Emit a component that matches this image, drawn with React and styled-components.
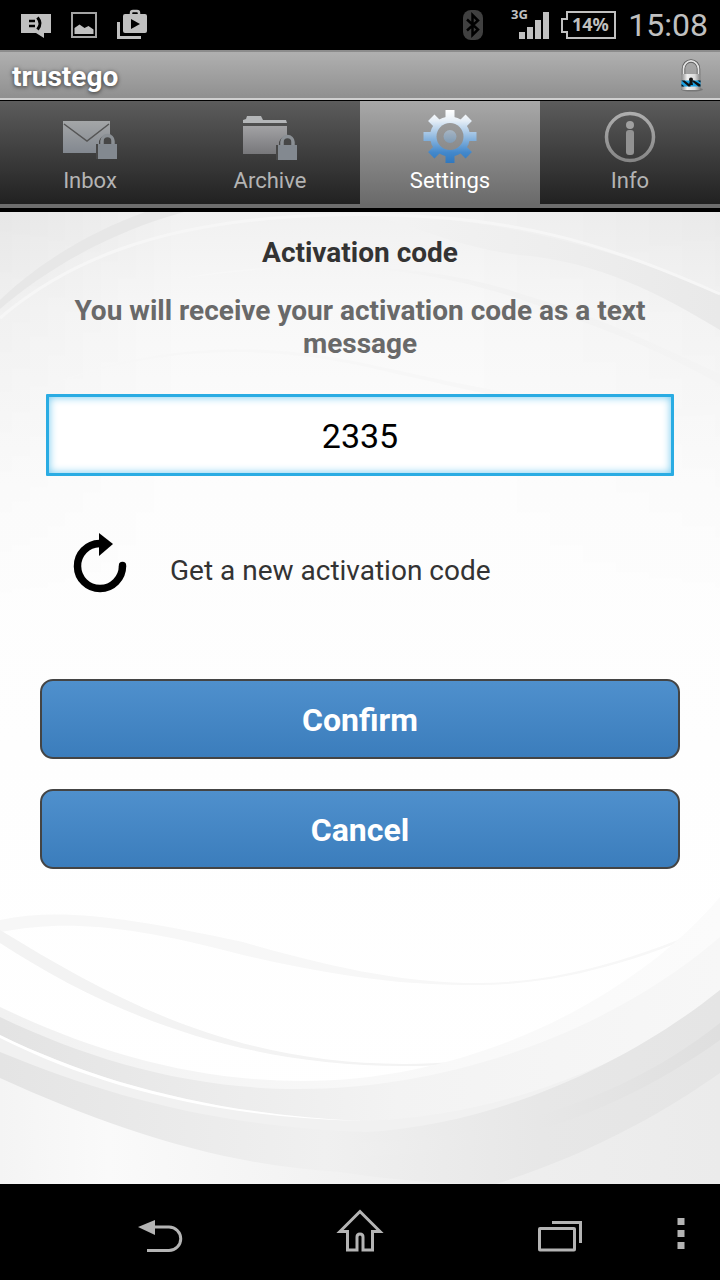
import React, { useState } from 'react';
import styled, { createGlobalStyle } from 'styled-components';

const GlobalStyle = createGlobalStyle`
  * {
    box-sizing: border-box;
  }
  body {
    margin: 0;
    background: #000000;
    font-family: Roboto, "Noto Sans", sans-serif;
  }
  svg {
    display: block;
    flex-shrink: 0;
  }
`;

const Screen = styled.div`
  display: flex;
  flex-direction: column;
  min-height: 100vh;
`;

const StatusBar = styled.div`
  display: flex;
  align-items: center;
  justify-content: space-between;
  height: 50px;
  padding: 0 12px 0 20px;
  color: #c0c0c0;
`;

const Notifications = styled.div`
  display: flex;
  align-items: center;
  gap: 20px;
`;

const Indicators = styled.div`
  display: flex;
  align-items: center;
  gap: 12px;
`;

const Bluetooth = styled.svg`
  margin-right: 14px;
`;

const Clock = styled.span`
  font-size: 32px;
  line-height: 50px;
`;

const TitleBar = styled.header`
  display: flex;
  align-items: center;
  justify-content: space-between;
  height: 51px;
  padding: 0 16px 0 12px;
  background: linear-gradient(#b0b0b0, #8e8e8e);
  border-top: 2px solid #8c8c8c;
  border-bottom: 1px solid #000000;
  box-shadow: inset 0 -2px 0 #cfcfcf;
`;

const AppName = styled.h1`
  margin: 0;
  font-size: 28px;
  line-height: 33px;
  font-weight: 700;
  color: #ffffff;
  text-shadow: 0 1px 4px rgba(0, 0, 0, 0.7);
`;

const Tabs = styled.nav`
  display: flex;
  height: 111px;
  border-bottom: 4px solid #000000;
`;

const Tab = styled.button`
  flex: 1;
  display: flex;
  flex-direction: column;
  align-items: center;
  gap: 5px;
  padding: 8px 0 0;
  border: 0;
  border-bottom: 4px solid ${({ $active }) => ($active ? '#6a6a6a' : '#6d6d6d')};
  background: ${({ $active }) =>
    $active ? 'linear-gradient(#a8a8a8, #6a6a6a)' : 'linear-gradient(#5c5c5c, #212121)'};
  color: ${({ $active }) => ($active ? '#ffffff' : '#b4b4b4')};
  font-family: inherit;
  font-size: 22px;
  line-height: 26px;
`;

const Content = styled.main`
  position: relative;
  flex: 1;
  padding: 24px 40px;
  background: #ffffff;
`;

const Waves = styled.svg`
  position: absolute;
  inset: 0;
  width: 100%;
  height: 100%;
`;

const Form = styled.form`
  position: relative;
  display: flex;
  flex-direction: column;
`;

const Heading = styled.h2`
  margin: 0 0 25px;
  font-size: 28px;
  line-height: 33px;
  font-weight: 700;
  text-align: center;
  color: #333333;
`;

const Hint = styled.label`
  margin-bottom: 34px;
  font-size: 28px;
  line-height: 33px;
  font-weight: 700;
  text-align: center;
  color: #696969;
`;

const CodeInput = styled.input`
  height: 82px;
  margin: 0 6px 56px;
  padding: 2px 12px 0;
  border: 3px solid #2aace3;
  border-radius: 1px;
  outline: 0;
  background: #ffffff;
  box-shadow: inset 0 0 8px #6cc7ee;
  color: #000000;
  font-family: inherit;
  font-size: 34px;
  text-align: center;
`;

const NewCode = styled.button`
  display: flex;
  align-items: center;
  gap: 42px;
  height: 76px;
  margin-bottom: 71px;
  padding: 0 0 0 32px;
  border: 0;
  background: none;
  color: #333333;
  font-family: inherit;
  font-size: 28px;
  line-height: 33px;
`;

const Action = styled.button`
  height: 80px;
  margin-bottom: 30px;
  padding: 2px 0 0;
  border: 2px solid #444444;
  border-radius: 13px;
  background: linear-gradient(#4f90cd, #3b7dbc);
  color: #ffffff;
  font-family: inherit;
  font-size: 32px;
  font-weight: 700;
`;

const NavBar = styled.footer`
  display: grid;
  grid-template-columns: 1fr 1fr 1fr 42px;
  height: 96px;
  padding: 0 18px 0 60px;
`;

const NavButton = styled.button`
  display: flex;
  align-items: center;
  justify-content: center;
  padding: 0;
  border: 0;
  background: none;
`;

function ChatIcon() {
  return (
    <svg width="31" height="30" viewBox="0 0 31 30">
      <path d="M1 4h30v19h-7v5l-8-5H1z" fill="#c0c0c0" />
      <path d="M9 11h6M9 16h6" stroke="#000" strokeWidth="2.500" />
      <path d="M17.500 7.500q5 6 0 12" fill="none" stroke="#000" strokeWidth="3" />
    </svg>
  );
}

function PictureIcon() {
  return (
    <svg width="26" height="26" viewBox="0 0 26 26">
      <rect x="1" y="1" width="24" height="24" fill="none" stroke="#a4a4a4" strokeWidth="2" />
      <path d="M3.500 22v-6l5-3.500 5 3.500 4-2 5 3.500V22z" fill="#c0c0c0" />
    </svg>
  );
}

function PlayStoreIcon() {
  return (
    <svg width="30" height="32" viewBox="0 0 30 32">
      <path d="M1.500 13v15.500H24" fill="none" stroke="#c0c0c0" strokeWidth="3" />
      <rect x="6" y="5" width="24" height="19" rx="2" fill="#c0c0c0" />
      <path d="M14 6V4q0-2 2-2h4q2 0 2 2v2" fill="none" stroke="#c0c0c0" strokeWidth="2.500" />
      <path d="M14 10v10l9-5z" fill="#000" />
    </svg>
  );
}

function BluetoothIcon() {
  return (
    <Bluetooth width="20" height="30" viewBox="0 0 20 30">
      <rect width="20" height="30" rx="8" fill="#404040" />
      <path d="M4 9.500l11 10-5.500 5.500V5l5.500 5.500-11 10" fill="none" stroke="#000" strokeWidth="2.500" />
    </Bluetooth>
  );
}

function SignalIcon() {
  return (
    <svg width="40" height="46" viewBox="0 0 40 46" fill="#c0c0c0">
      <text x="2" y="17" fontFamily="Noto Sans, sans-serif" fontSize="13" fontWeight="700">3G</text>
      <path d="M10 30h6v7h-6zM18 25h6v12h-6zM26 18h6v19h-6zM34 10h6v27h-6z" />
    </svg>
  );
}

function BatteryIcon() {
  return (
    <svg width="55" height="30" viewBox="0 0 55 30">
      <path d="M6 2h48v26H6v-6H1V9h5z" fill="none" stroke="#c0c0c0" strokeWidth="2" />
      <text x="11" y="21" fontFamily="Noto Sans, sans-serif" fontSize="18" fontWeight="700" fill="#c0c0c0">14%</text>
    </svg>
  );
}

function PadlockLogo() {
  return (
    <svg width="26" height="34" viewBox="0 0 26 34">
      <defs>
        <linearGradient id="steel" x1="0" x2="1" y1="0" y2="0">
          <stop offset="0" stopColor="#8a8a8a" />
          <stop offset="0.300" stopColor="#f0f0f0" />
          <stop offset="0.700" stopColor="#dadada" />
          <stop offset="1" stopColor="#808080" />
        </linearGradient>
      </defs>
      <ellipse cx="14" cy="30.500" rx="11" ry="2" fill="#000" opacity="0.200" />
      <path d="M5.500 16V10a7 7.500 0 0 1 15 0V16" fill="none" stroke="#5e5e5e" strokeWidth="3.500" />
      <path d="M5.500 16V10a7 7.500 0 0 1 15 0V16" fill="none" stroke="#e4e4e4" strokeWidth="1.700" />
      <rect x="3.500" y="15" width="19" height="16" rx="1.500" fill="url(#steel)" />
      <path d="M3.500 21.500h19v6h-19z" fill="#1b9fe0" />
      <path d="M3.500 21.500h3l6 4.500v1.500h-2zM13 21.500h3l6.500 4v2h-2zM3.500 25l3 2.500h-3zM19.500 21.500h3v2z" fill="#111" />
      <circle cx="13" cy="20.500" r="2" fill="#111" />
      <path d="M12 21h2l1 5h-4z" fill="#111" />
    </svg>
  );
}

function SmallLock() {
  return (
    <g>
      <path d="M33 50V35h3v-3a9 9 0 0 1 17 0v3h1v15z" fill="#474747" />
      <path d="M39 36v-4a5.500 5.500 0 0 1 11 0v4" fill="none" stroke="#8b9095" strokeWidth="3.500" />
      <rect x="35" y="35" width="19" height="15" fill="#838990" />
    </g>
  );
}

function InboxIcon() {
  return (
    <svg width="54" height="54" viewBox="0 0 54 54">
      <defs>
        <linearGradient id="tabShade" gradientUnits="userSpaceOnUse" x1="0" x2="0" y1="10" y2="50">
          <stop offset="0" stopColor="#a6a8a9" />
          <stop offset="1" stopColor="#7c828b" />
        </linearGradient>
      </defs>
      <rect y="12" width="47" height="32" fill="url(#tabShade)" />
      <path d="M1 15l23 17 22-17" fill="none" stroke="#555" strokeWidth="1.500" />
      <SmallLock />
    </svg>
  );
}

function ArchiveIcon() {
  return (
    <svg width="54" height="54" viewBox="0 0 54 54">
      <defs>
        <linearGradient id="folderShade" x1="0" x2="0" y1="0" y2="1">
          <stop offset="0" stopColor="#a2a2a4" />
          <stop offset="1" stopColor="#77777a" />
        </linearGradient>
      </defs>
      <path d="M0 14v-3l3-1 1-3h14l2 4h23l1 3z" fill="#b4b6b8" />
      <rect y="17" width="44" height="28" fill="url(#folderShade)" />
      <g transform="translate(0 1)">
        <SmallLock />
      </g>
    </svg>
  );
}

function GearIcon() {
  return (
    <svg width="54" height="54" viewBox="0 0 54 54">
      <defs>
        <linearGradient id="gearShade" gradientUnits="userSpaceOnUse" x1="0" x2="0" y1="1" y2="54">
          <stop offset="0" stopColor="#ffffff" />
          <stop offset="0.200" stopColor="#e6eef6" />
          <stop offset="0.550" stopColor="#86b3de" />
          <stop offset="0.800" stopColor="#4388cb" />
          <stop offset="1" stopColor="#3078bf" />
        </linearGradient>
        <mask id="gearShape">
          <g fill="#fff">
            <circle cx="27" cy="27.500" r="20" />
            {[0, 45, 90, 135].map((angle) => (
              <rect key={angle} x="22.500" y="1" width="9" height="53" transform={`rotate(${angle} 27 27.500)`} />
            ))}
          </g>
          <circle cx="27" cy="27.500" r="13.500" fill="#000" />
          <circle cx="27" cy="27.500" r="6.500" fill="#888" />
        </mask>
      </defs>
      <rect width="54" height="54" fill="url(#gearShade)" mask="url(#gearShape)" />
    </svg>
  );
}

function InfoIcon() {
  return (
    <svg width="54" height="54" viewBox="0 0 54 54">
      <defs>
        <linearGradient id="infoShade" gradientUnits="userSpaceOnUse" x1="0" x2="0" y1="2" y2="52">
          <stop offset="0" stopColor="#b0b0b0" />
          <stop offset="1" stopColor="#868686" />
        </linearGradient>
      </defs>
      <circle cx="27" cy="28" r="23.500" fill="none" stroke="url(#infoShade)" strokeWidth="3.500" />
      <circle cx="27" cy="16" r="4" fill="#a0a0a0" />
      <rect x="23" y="21" width="8" height="25" rx="3" fill="#929292" />
    </svg>
  );
}

function RefreshIcon() {
  return (
    <svg width="56" height="76" viewBox="0 0 56 76">
      <path d="M50.500 34a22.500 22.500 0 1 1-23-22.500" fill="none" stroke="#000" strokeWidth="7.500" />
      <circle cx="50.500" cy="33.500" r="3.700" fill="#000" />
      <path d="M27 1l14 11-14 12z" fill="#000" />
    </svg>
  );
}

function BackIcon() {
  return (
    <svg width="46" height="54" viewBox="0 0 46 54">
      <path d="M1 22l17-7v15z" fill="#b4b4b4" />
      <path d="M16 22h16a11.500 11.500 0 0 1 0 23.500H10" fill="none" stroke="#b4b4b4" strokeWidth="3" />
    </svg>
  );
}

function HomeIcon() {
  return (
    <svg width="48" height="54" viewBox="0 0 48 54">
      <path
        d="M24 6.500L4 26.500h7.500v18.500h9.500V32q0-3 3-3t3 3v13h9.500V26.500H44z"
        fill="none"
        stroke="#b4b4b4"
        strokeWidth="3"
      />
    </svg>
  );
}

function RecentIcon() {
  return (
    <svg width="46" height="54" viewBox="0 0 46 54" fill="none" stroke="#b4b4b4" strokeWidth="3">
      <path d="M15 17.500h28.500V38" />
      <rect x="2.500" y="23.500" width="35" height="21.500" rx="0.500" />
    </svg>
  );
}

function MenuIcon() {
  return (
    <svg width="8" height="54" viewBox="0 0 8 54">
      <path d="M0.500 13h7v7h-7zM0.500 25h7v7h-7zM0.500 37h7v7h-7z" fill="#b4b4b4" />
    </svg>
  );
}

function Background() {
  return (
    <Waves viewBox="0 0 720 972" preserveAspectRatio="none" aria-hidden="true">
      <defs>
        <linearGradient id="topFade" x1="0" x2="0" y1="0" y2="1">
          <stop offset="0" stopColor="#f1f1f1" />
          <stop offset="0.100" stopColor="#f8f8f8" />
          <stop offset="0.280" stopColor="#fdfdfd" />
          <stop offset="0.550" stopColor="#fefefe" />
          <stop offset="1" stopColor="#ffffff" />
        </linearGradient>
        <linearGradient id="sideFade" x1="0" x2="1" y1="0" y2="0">
          <stop offset="0" stopColor="#000" stopOpacity="0.040" />
          <stop offset="0.250" stopColor="#000" stopOpacity="0" />
          <stop offset="0.650" stopColor="#000" stopOpacity="0" />
          <stop offset="1" stopColor="#000" stopOpacity="0.030" />
        </linearGradient>
        <linearGradient id="sideMask" x1="0" x2="0" y1="0" y2="1">
          <stop offset="0" stopColor="#fff" />
          <stop offset="1" stopColor="#000" />
        </linearGradient>
        <mask id="upper">
          <rect width="720" height="400" fill="url(#sideMask)" />
        </mask>
        <linearGradient id="rightArc" x1="0" x2="1" y1="0" y2="0">
          <stop offset="0" stopColor="#f3f3f3" />
          <stop offset="1" stopColor="#e9e9e9" />
        </linearGradient>
        <linearGradient id="thinArc" x1="0" x2="1" y1="0" y2="0">
          <stop offset="0" stopColor="#f8f8f8" />
          <stop offset="0.600" stopColor="#f2f2f2" />
          <stop offset="1" stopColor="#f4f4f4" />
        </linearGradient>
        <linearGradient id="bowl" x1="0" x2="1" y1="0" y2="0">
          <stop offset="0" stopColor="#f1f1f1" />
          <stop offset="0.500" stopColor="#f8f8f8" />
          <stop offset="1" stopColor="#fbfbfb" />
        </linearGradient>
        <linearGradient id="leftBand" x1="0" x2="1" y1="0" y2="0">
          <stop offset="0" stopColor="#e3e3e3" />
          <stop offset="0.550" stopColor="#f3f3f3" />
          <stop offset="1" stopColor="#f7f7f7" />
        </linearGradient>
        <linearGradient id="lowBand" x1="0" x2="1" y1="0" y2="0">
          <stop offset="0" stopColor="#e4e4e4" />
          <stop offset="0.450" stopColor="#f0f0f0" />
          <stop offset="0.750" stopColor="#e7e7e7" />
          <stop offset="1" stopColor="#e5e5e5" />
        </linearGradient>
        <linearGradient id="stripe" x1="0" x2="1" y1="0" y2="0">
          <stop offset="0" stopColor="#efefef" />
          <stop offset="1" stopColor="#dfdfdf" />
        </linearGradient>
        <linearGradient id="floor" x1="0" x2="1" y1="0" y2="0">
          <stop offset="0" stopColor="#f4f4f4" />
          <stop offset="0.150" stopColor="#fafafa" />
          <stop offset="0.500" stopColor="#f1f1f1" />
          <stop offset="1" stopColor="#ebebeb" />
        </linearGradient>
      </defs>
      <rect width="720" height="972" fill="url(#topFade)" />
      <rect width="720" height="400" fill="url(#sideFade)" mask="url(#upper)" />

      {/* arcs behind the heading */}
      <path d="M0 88C40 50 90 20 145 0H184C110 20 45 58 0 97z" fill="#e7e7e7" />
      <path d="M367 3C500 4 620 40 720 80V118C660 82 600 50 520 43C460 36 420 15 367 3z" fill="url(#rightArc)" />
      <path d="M0 106C60 55 150 8 330 3S610 34 720 82" fill="none" stroke="#f6f6f6" strokeWidth="3" />
      <path d="M184 66C300 45 420 52 528 90S660 140 720 172V162C650 130 600 105 528 84C420 46 300 50 184 66z" fill="url(#thinArc)" />
      <path d="M37 178C130 138 240 125 358 150S620 210 720 192V202C600 214 480 180 358 153C240 128 130 141 37 178z" fill="#f7f7f7" />

      {/* thin ribbons under the buttons */}
      <path d="M0 708C60 696 120 704 243 730C340 758 410 771 477 771C570 771 650 740 720 711V714C650 743 570 773 477 773C400 773 340 765 243 743C120 710 60 709 0 720z" fill="#f7f7f7" />
      <path d="M0 718C110 785 230 852 404 852C470 852 530 842 574 830C530 845 470 854 404 854C230 854 100 796 0 731z" fill="#f3f3f3" />

      {/* bowl at the bottom */}
      <path d="M0 795C90 838 190 869 303 869C480 869 640 780 720 685V972H0z" fill="url(#bowl)" />
      <path d="M0 805C90 848 190 877 298 877C450 877 610 820 720 725V972H0z" fill="url(#leftBand)" />
      <path d="M0 823C100 872 220 903 363 909C500 905 640 850 720 778V972H0z" fill="#f1f1f1" />
      <path d="M0 840C110 885 220 915 367 920C500 912 630 850 720 778V972H0z" fill="url(#lowBand)" />
      <path d="M0 823C100 872 220 903 363 909C220 906 100 876 0 826z" fill="#ffffff" />
      <path d="M358 931C500 925 620 890 720 811V828C620 900 500 943 367 944z" fill="url(#stripe)" />
      <path d="M0 866C110 916 220 953 340 960C390 968 440 972 496 972C580 945 650 910 720 861V972H0z" fill="url(#floor)" />
    </Waves>
  );
}

const TABS = [
  { name: 'Inbox', icon: InboxIcon },
  { name: 'Archive', icon: ArchiveIcon },
  { name: 'Settings', icon: GearIcon },
  { name: 'Info', icon: InfoIcon },
];

function App() {
  const [tab, setTab] = useState('Settings');
  const [code, setCode] = useState('2335');

  return (
    <Screen>
      <GlobalStyle />
      <StatusBar>
        <Notifications>
          <ChatIcon />
          <PictureIcon />
          <PlayStoreIcon />
        </Notifications>
        <Indicators>
          <BluetoothIcon />
          <SignalIcon />
          <BatteryIcon />
          <Clock>15:08</Clock>
        </Indicators>
      </StatusBar>
      <TitleBar>
        <AppName>trustego</AppName>
        <PadlockLogo />
      </TitleBar>
      <Tabs>
        {TABS.map(({ name, icon: Icon }) => (
          <Tab key={name} type="button" $active={name === tab} onClick={() => setTab(name)}>
            <Icon />
            {name}
          </Tab>
        ))}
      </Tabs>
      <Content>
        <Background />
        <Form onSubmit={(e) => e.preventDefault()}>
          <Heading>Activation code</Heading>
          <Hint htmlFor="code">You will receive your activation code as a text message</Hint>
          <CodeInput id="code" inputMode="numeric" value={code} onChange={(e) => setCode(e.target.value)} />
          <NewCode type="button" onClick={() => setCode('')}>
            <RefreshIcon />
            Get a new activation code
          </NewCode>
          <Action type="submit">Confirm</Action>
          <Action type="button">Cancel</Action>
        </Form>
      </Content>
      <NavBar>
        <NavButton type="button" aria-label="Back"><BackIcon /></NavButton>
        <NavButton type="button" aria-label="Home"><HomeIcon /></NavButton>
        <NavButton type="button" aria-label="Recent apps"><RecentIcon /></NavButton>
        <NavButton type="button" aria-label="Menu"><MenuIcon /></NavButton>
      </NavBar>
    </Screen>
  );
}

export default App;
